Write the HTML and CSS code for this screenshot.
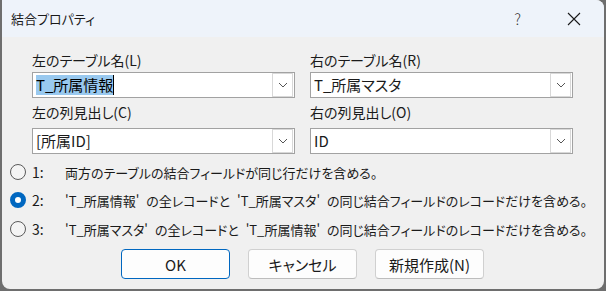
FILE: index.html
```html
<!DOCTYPE html>
<html lang="ja">

<head>
    <meta charset="UTF-8">
    <meta name="viewport" content="width=device-width, initial-scale=1.0">
    <title>結合プロパティ</title>

    <link rel="stylesheet" href="styles.css">
</head>

<body>
    <div class="window">
        <div class="title-bar">
            <span class="title">結合プロパティ</span>
            <span class="help">?</span>
            <span class="close">
                <svg width="14" height="14" viewBox="0 0 14 14">
                    <path d="M1 1 L13 13 M13 1 L1 13" stroke="#1a1a1a" stroke-width="1.1" fill="none" />
                </svg>
            </span>
        </div>

        <div class="dialog-body">
            <div class="fields">
                <div class="field-label first">左のテーブル名(L)</div>
                <div class="field-label first">右のテーブル名(R)</div>

                <div class="combo first-box">
                    <span class="combo-text"><span class="selected">T_所属情報</span><span class="caret"></span></span>
                    <span class="drop-btn"><svg width="10" height="6" viewBox="0 0 10 6"><path d="M1 1 L5 5 L9 1" stroke="#555" stroke-width="1" fill="none" /></svg></span>
                </div>
                <div class="combo first-box">
                    <span class="combo-text">T_所属マスタ</span>
                    <span class="drop-btn"><svg width="10" height="6" viewBox="0 0 10 6"><path d="M1 1 L5 5 L9 1" stroke="#555" stroke-width="1" fill="none" /></svg></span>
                </div>

                <div class="field-label second">左の列見出し(C)</div>
                <div class="field-label second">右の列見出し(O)</div>

                <div class="combo second-box">
                    <span class="combo-text">[所属ID]</span>
                    <span class="drop-btn"><svg width="10" height="6" viewBox="0 0 10 6"><path d="M1 1 L5 5 L9 1" stroke="#555" stroke-width="1" fill="none" /></svg></span>
                </div>
                <div class="combo second-box">
                    <span class="combo-text">ID</span>
                    <span class="drop-btn"><svg width="10" height="6" viewBox="0 0 10 6"><path d="M1 1 L5 5 L9 1" stroke="#555" stroke-width="1" fill="none" /></svg></span>
                </div>
            </div>

            <div class="options">
                <div class="option">
                    <span class="radio"></span>
                    <span class="option-num">1:</span>
                    <span class="option-text">両方のテーブルの結合フィールドが同じ行だけを含める。</span>
                </div>
                <div class="option">
                    <span class="radio checked"></span>
                    <span class="option-num">2:</span>
                    <span class="option-text">'T_所属情報' の全レコードと 'T_所属マスタ' の同じ結合フィールドのレコードだけを含める。</span>
                </div>
                <div class="option">
                    <span class="radio"></span>
                    <span class="option-num">3:</span>
                    <span class="option-text">'T_所属マスタ' の全レコードと 'T_所属情報' の同じ結合フィールドのレコードだけを含める。</span>
                </div>
            </div>

            <div class="buttons">
                <button class="btn default">OK</button>
                <button class="btn">キャンセル</button>
                <button class="btn">新規作成(N)</button>
            </div>
        </div>
    </div>
</body>

</html>
```

FILE: styles.css
```css
body {
    margin: 0;
    width: 606px;
    height: 291px;
    overflow: hidden;
    background-color: #6e6e6e;
    font-family: "Noto Sans CJK JP", "Noto Sans", sans-serif;
    font-feature-settings: "palt";
    color: #1a1a1a;
}

.window {
    margin-left: 2px;
    width: 602px;
    height: 289px;
    background-color: #f0f0f0;
    border-radius: 0 8px 8px 8px;
    overflow: hidden;
}

.title-bar {
    height: 37px;
    background-color: #eef3fa;
    display: flex;
    align-items: center;
}

.title {
    margin-left: 9px;
    font-size: 13px;
    flex: 1;
}

.help {
    font-size: 15px;
    font-weight: 300;
    margin-right: 46px;
    color: #333;
}

.close {
    display: flex;
    margin-right: 23px;
}

.dialog-body {
    padding-top: 13px;
}

.fields {
    display: grid;
    grid-template-columns: 263px 263px;
    column-gap: 15px;
    padding-left: 30px;
}

.field-label {
    font-size: 14px;
    line-height: 20px;
    height: 20px;
}

.field-label.second {
    margin-top: 4px;
}

.combo {
    height: 26px;
    box-sizing: border-box;
    border: 1px solid #a2a2a2;
    background: white;
    display: flex;
    align-items: center;
    padding: 1px;
}

.first-box {
    margin-top: 2px;
}

.second-box {
    margin-top: 6px;
}

.combo-text {
    flex: 1;
    font-size: 15px;
    line-height: 20px;
    padding-left: 2px;
    display: flex;
    align-items: center;
}

.selected {
    background-color: #99c9ef;
    color: #000;
}

.caret {
    width: 1px;
    height: 20px;
    background: #000;
}

.drop-btn {
    width: 19px;
    height: 22px;
    border: 1px solid #d8d8d8;
    display: flex;
    align-items: center;
    justify-content: center;
}

.options {
    margin-top: 4px;
}

.option {
    height: 28px;
    display: flex;
    align-items: center;
    font-size: 13px;
    white-space: nowrap;
    word-spacing: 4px;
}

.option:last-child {
    height: 30px;
}

.radio {
    width: 16px;
    height: 16px;
    box-sizing: border-box;
    border: 1px solid #5a5a5a;
    border-radius: 50%;
    margin-left: 8px;
    margin-right: 6px;
    background: #f4f4f4;
}

.radio.checked {
    border: 5px solid #0067c0;
    background: white;
}

.option-num {
    width: 33px;
    font-size: 14px;
}

.buttons {
    margin-top: 5px;
    display: flex;
    gap: 18px;
    padding-left: 119px;
}

.btn {
    width: 109px;
    height: 30px;
    border: 1px solid #d0d0d0;
    border-bottom-color: #bdbdbd;
    border-radius: 4px;
    background: #fdfdfd;
    font-family: inherit;
    font-feature-settings: "palt";
    font-size: 15px;
    color: #1a1a1a;
    padding: 0;
}

.btn.default {
    border: 1px solid #0067c0;
}
```
